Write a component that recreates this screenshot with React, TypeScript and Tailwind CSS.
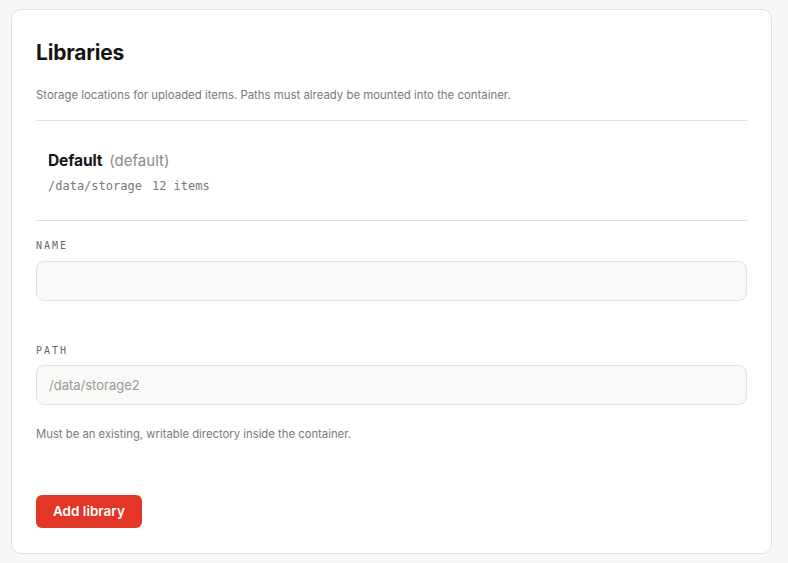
import React from 'react';

const LibrariesSettings: React.FC = () => {
  return (
    <div className="min-h-screen bg-[#f8f8f6] p-[9px] pl-[11px] pr-[16px] font-['Inter',sans-serif] text-[#161616]">
      <div className="bg-white rounded-[10px] border border-[#e2e2de] px-6 pt-[29px] pb-[25px]">
        {/* Header */}
        <h2 className="text-[21px] font-bold leading-[28px] tracking-[-0.01em]">Libraries</h2>
        <p className="mt-[20px] text-[11.4px] leading-4 text-[#7a7a76]">
          Storage locations for uploaded items. Paths must already be mounted into the container.
        </p>
        <div className="mt-[17px] border-t border-[#e2e2de]"></div>

        {/* Existing libraries */}
        <div className="px-3 pt-[30px] pb-[26px]">
          <div className="flex items-baseline gap-[7px]">
            <span className="text-[15.6px] font-bold leading-5 tracking-[-0.01em]">Default</span>
            <span className="text-[15px] leading-5 text-[#8a8a86]">(default)</span>
          </div>
          <div className="mt-[7px] flex gap-[10px] font-['DejaVu_Sans_Mono',monospace] text-[12px] leading-4 text-[#7a7a76]">
            <span>/data/storage</span>
            <span>12 items</span>
          </div>
        </div>
        <div className="border-t border-[#e2e2de]"></div>

        {/* Form */}
        <div className="pt-[17px]">
          <label className="block font-['DejaVu_Sans_Mono',monospace] text-[10px] leading-4 tracking-[0.2em] text-[#6a6a66]">
            NAME
          </label>
          <input
            type="text"
            className="mt-[7px] block w-full h-10 rounded-lg border border-[#e2e2de] bg-[#f9f9f7] px-3 text-[13px] outline-none"
          />

          <label className="mt-[42px] block font-['DejaVu_Sans_Mono',monospace] text-[10px] leading-4 tracking-[0.2em] text-[#6a6a66]">
            PATH
          </label>
          <input
            type="text"
            placeholder="/data/storage2"
            className="mt-[6px] block w-full h-10 rounded-lg border border-[#e2e2de] bg-[#f9f9f7] px-3 text-[13px] outline-none placeholder:text-[#9a9a96]"
          />
          <p className="mt-[21px] text-[11.3px] leading-4 text-[#7a7a76]">
            Must be an existing, writable directory inside the container.
          </p>

          <button className="mt-[53px] h-[33px] rounded-[6px] bg-[#e23626] px-[17px] text-[13.5px] font-semibold text-white">
            Add library
          </button>
        </div>
      </div>
    </div>
  );
};

export default function App() {
  return <LibrariesSettings />;
}
